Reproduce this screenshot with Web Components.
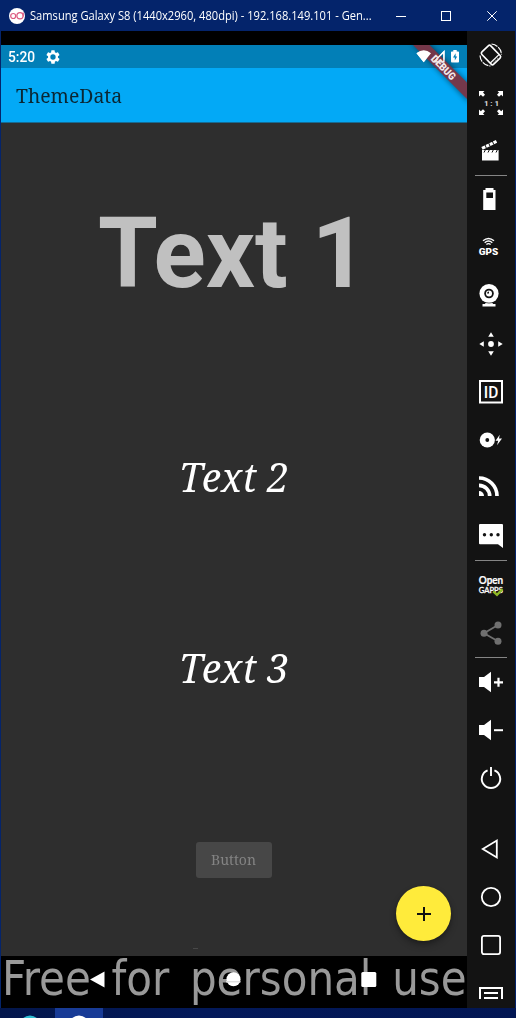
<!DOCTYPE html>
<html lang="en">
<head>
<meta charset="utf-8">
<title>Samsung Galaxy S8</title>
<style>
html,body{margin:0;width:516px;height:1018px;overflow:hidden;background:#04246b}
</style>
</head>
<body>
<emulator-window></emulator-window>
<script>
const define=(name,html,init)=>customElements.define(name,class extends HTMLElement{
  connectedCallback(){
    if(this.shadowRoot)return;
    this.attachShadow({mode:'open'}).innerHTML=typeof html==='function'?html(this):html;
    if(init)init(this);
  }
});

/* One line of text, stretched horizontally to the width given by "w". */
define('fit-text',`<style>:host{display:block;white-space:nowrap}span{display:inline-block;transform-origin:0 50%}</style><span><slot></slot></span>`,el=>{
  const s=el.shadowRoot.querySelector('span');
  const w=parseFloat(el.getAttribute('w'));
  el.style.width=w+'px';
  s.style.transform=`scaleX(${w/s.offsetWidth})`;
});

define('title-bar',`<style>
:host{display:flex;align-items:center;height:31px;background:#04246b;color:#fff;font:12px/18px "Open Sans","Noto Sans",sans-serif;box-sizing:border-box;padding-left:9px}
svg{display:block;flex:none}.logo{margin-right:5px}
.controls{margin-left:auto}
</style>
<svg class="logo" width="16" height="16" viewBox="0 0 16 16"><circle cx="8" cy="8" r="8" fill="#fff"/><g fill="none" stroke="#dc5a80" stroke-width="1.2"><circle cx="4.2" cy="8" r="2.5"/><circle cx="11" cy="7.8" r="3.1"/><path d="M14.2 4.5v4"/></g></svg>
<fit-text w="342">Samsung Galaxy S8 (1440x2960, 480dpi) - 192.168.149.101 - Gen...</fit-text>
<svg class="controls" width="136" height="30" viewBox="380 0 136 30" fill="none" stroke="#fff"><path d="M396 15.5h10"/><rect x="441.500" y="10.500" width="9" height="9"/><path d="M487.300 10.300l9.400 9.400M496.700 10.300l-9.400 9.400"/></svg>`);

define('status-bar',`<style>
:host{display:flex;align-items:center;height:23px;background:#027fb7;color:#fff;font:500 14px/23px Roboto,sans-serif;padding-left:7px}
svg{display:block;flex:none}fit-text{padding-top:1px}.gear{margin-left:9px}.right{margin-left:auto}
</style>
<fit-text w="27.500">5:20</fit-text>
<svg class="gear" width="16" height="16" viewBox="0 0 24 24" fill="#fff"><path d="M19.400 13c.04-.3.060-.65.060-1s-.02-.7-.07-1l2.100-1.650a.5.5 0 0 0 .12-.64l-2-3.460a.5.5 0 0 0-.6-.22l-2.500 1a7 7 0 0 0-1.700-.98l-.38-2.650A.5.5 0 0 0 14 2h-4a.5.5 0 0 0-.5.420l-.37 2.650a7 7 0 0 0-1.700.98l-2.500-1a.5.5 0 0 0-.6.220l-2 3.460a.5.5 0 0 0 .12.640L4.600 11a8 8 0 0 0 0 2l-2.150 1.650a.5.5 0 0 0-.12.640l2 3.460c.12.220.4.300.6.220l2.500-1c.52.400 1.080.730 1.700.98l.37 2.650c.04.240.25.420.5.420h4c.25 0 .46-.18.500-.42l.37-2.650a7 7 0 0 0 1.700-.98l2.500 1c.22.080.48 0 .6-.22l2-3.460a.5.5 0 0 0-.12-.64zM12 16a4 4 0 1 1 0-8 4 4 0 0 1 0 8z"/></svg>
<svg class="right" width="51" height="23" viewBox="416 45 51 23" fill="#fff"><path d="M416.500 53.200Q423.700 47.300 431 53.200L423.700 62.300z"/><path d="M443.900 51.800v10h-10z" fill="none" stroke="#fff" stroke-width="1.500"/><path d="M433 62.500l6-6v6z"/><path d="M453.300 51.500v-1.500h3.400v1.500h1.500q.8 0 .8.800v9.500q0 .8-.8.800h-6.400q-.8 0-.8-.8v-9.500q0-.8.8-.8z"/><path d="M455.600 53.300l-2.600 4.200h1.800v3l2.400-4.100h-1.600z" fill="#027fb7"/></svg>`);

define('app-bar',`<style>
:host{display:flex;align-items:center;box-sizing:border-box;height:55px;background:#03a9f6;color:#0b2733;font:19.500px/52px "Noto Serif","Droid Serif","DejaVu Serif Condensed","DejaVu Serif",serif;padding:2px 15px 0;border-bottom:1px solid #176b93}
</style><slot></slot>`);

define('debug-banner',`<style>:host{position:absolute;right:0;top:14px;width:66px;height:66px;overflow:hidden;z-index:3}svg{display:block}</style>
<svg width="66" height="66" viewBox="401 45 66 66"><defs><filter id="b" x="-30%" y="-30%" width="160%" height="160%"><feGaussianBlur stdDeviation="2.500"/></filter></defs>
<path d="M411 43L429 43L469 83V103z" fill="#000" opacity=".4" filter="url(#b)"/><path d="M411 43H427.500L469 84.500V101z" fill="#7b3546" opacity=".94"/>
<g fill="#fff"><path d="M416.500 53.200Q423.700 47.300 431 53.200L423.700 62.300z"/><path d="M443.900 51.800v10h-10z" fill="none" stroke="#fff" stroke-width="1.300"/></g>
<text transform="translate(443.500 67.500) rotate(45)" y="3.600" text-anchor="middle" textLength="30" lengthAdjust="spacingAndGlyphs" font-family="Roboto,sans-serif" font-weight="900" font-size="10.500" fill="#f3e9eb">DEBUG</text></svg>`);

define('raised-button',`<style>:host{display:flex;align-items:center;justify-content:center;width:75.500px;height:35.500px;border-radius:3px;background:#474747;color:#848484;font:13.500px/37px "Noto Serif","Droid Serif","DejaVu Serif Condensed","DejaVu Serif",serif}slot{display:block;padding:1px 1.500px 0 0}</style><slot></slot>`);

define('action-button',`<style>:host{position:absolute;left:395px;top:855px;width:55px;height:55px;border-radius:50%;background:#ffeb3b;box-shadow:0 4px 7px rgba(0,0,0,.3),0 1px 3px rgba(0,0,0,.15)}svg{display:block}</style>
<svg width="55" height="55" viewBox="0 0 55 55"><path d="M21 28h14M28 21v14" stroke="#111" stroke-width="2"/></svg>`);

define('nav-bar',`<style>
:host{display:block;position:relative;height:52px;background:#000}
.keys{display:block}
.mark{position:absolute;left:1px;top:-6px;color:#999;font:48px/56px "DejaVu Sans Condensed","DejaVu Sans",sans-serif;word-spacing:7.500px}
</style>
<div class="mark"><fit-text w="464.500">Free for personal use</fit-text></div>
<svg class="keys" style="position:relative" width="466" height="52" viewBox="1 956 466 52" fill="#fff"><path d="M90 979.500L104.500 971.500V987.500z"/><circle cx="233.500" cy="979.200" r="7"/><rect x="361.300" y="972" width="15" height="15" rx="1.500"/><path d="M226 981.700h14.500" stroke="#ddd" stroke-width="1.500"/></svg>`);

define('phone-screen',`<style>
:host{display:block;position:relative;width:466px;height:977px;margin-left:1px;background:#000;box-sizing:border-box;padding-top:14px;overflow:hidden}
main{display:flex;flex-direction:column;height:833px;background:#2e2e2e;color:#fff;overflow:hidden}
.t1{margin:73px 0 0 97px;font:700 98.500px/116px Roboto,sans-serif;color:#c0c0c0}
.t2{font:italic 40px/56px "Noto Serif","Droid Serif","Liberation Serif",serif;margin-left:177.500px}
.a{margin-top:137px}.b{margin-top:135px}
raised-button{margin:146px 0 0 195px}
.dash{width:5px;height:1px;background:#484848;margin:70px 0 0 192px}
</style>
<status-bar></status-bar>
<app-bar><fit-text w="106.500">ThemeData</fit-text></app-bar>
<main>
<fit-text class="t1" w="269">Text 1</fit-text>
<fit-text class="t2 a" w="109.500">Text 2</fit-text>
<fit-text class="t2 b" w="109.500">Text 3</fit-text>
<raised-button><fit-text w="44.500">Button</fit-text></raised-button>
<div class="dash"></div>
</main>
<nav-bar></nav-bar>
<action-button></action-button>
<debug-banner></debug-banner>`);

const corner='<path d="M0 0h5.500l-1.500 1.500 2 2.200-2 2-2.200-2L0 5.500z"/>';
const speaker='<path d="M0 7h5L12 1.800v20.400L5 17H0z"/>';
const icons={
rotate:'<g transform="rotate(46 12 12)" fill="none" stroke="#fff"><rect x="3.500" y="5.800" width="17" height="12.400" rx="1.800" stroke-width="1.600"/><path d="M17.300 6v12" stroke-width="1.300"/><path d="M18.900 9v1M18.900 11.500v1M18.900 14v1" stroke-width=".8"/></g><g fill="none" stroke="#fff" stroke-width="1.200"><path d="M12.500 1a11 11 0 0 1 10 10.500M1 12.500a11 11 0 0 0 10.500 10.500" stroke-dasharray="6.500 1"/></g>',
scale:corner+`<g transform="translate(24) scale(-1 1)">${corner}</g><g transform="translate(0 24) scale(1 -1)">${corner}</g><g transform="translate(24 24) scale(-1 -1)">${corner}</g><text x="5" y="15" font-family="Roboto,sans-serif" font-weight="700" font-size="8" textLength="15" fill="#ddd">1:1</text>`,
clap:'<path d="M3 11h16.600v10.500H3z"/><path d="M3 9.300L17.500 2.300" stroke="#fff" stroke-width="3"/><path d="M5.800 5.400l1.600 3.800M9.500 3.600l1.600 3.800M13.200 1.800l1.600 3.800M6.500 10.500L5 13.500M10.500 10.500L9 13.500M14.500 10.500L13 13.500M18.500 10.500L17 13.500" stroke="#131313" stroke-width="1"/>',
battery:'<path fill-rule="evenodd" d="M6.500 0h8v2h2v20H4.200V2h2.300zM7.300 4.600v5.500H14V4.600z"/>',
gps:'<g fill="none" stroke="#fff" stroke-width="1.400"><path d="M4 4.800Q9.500 0 15 4.800M5.700 6.800Q9.500 3.400 13.300 6.800M7.400 8.500Q9.500 6.800 11.600 8.500"/></g><text x="-.3" y="18.800" font-family="Roboto,sans-serif" font-weight="900" font-size="9.500" textLength="19.500" lengthAdjust="spacingAndGlyphs">GPS</text>',
cam:'<circle cx="10" cy="9.500" r="9.600"/><path d="M7 18h6l1 2h2.500v2.600h-13V20H6z"/><circle cx="10" cy="9.500" r="4.800" fill="#131313"/><circle cx="10" cy="9.500" r="3" fill="#fff"/><path d="M10 9.500V7.500a2 2 0 0 0-2 2z" fill="#131313"/><path d="M5 18.300q5 1.600 10 0" fill="none" stroke="#131313" stroke-width=".7"/>',
move:'<circle cx="12" cy="12" r="2.900"/><path d="M12 .3l2.800 4.500H9.200zM12 23.700l2.800-4.500H9.200zM.3 12l4.500-2.800v5.600zM23.700 12l-4.500-2.800v5.600z"/>',
id:'<rect x="1" y="1" width="22" height="21.500" fill="none" stroke="#fff" stroke-width="2"/><text x="12" y="17.800" text-anchor="middle" font-family="Roboto,sans-serif" font-weight="500" font-size="16.500" textLength="14.500" lengthAdjust="spacingAndGlyphs">ID</text>',
disc:'<circle cx="8.300" cy="12" r="7.600"/><circle cx="8.300" cy="12" r="1.900" fill="#131313"/><path d="M20.700 6.800l-4.200 6h2.700L18 17.300l5-6.800h-3z"/>',
rss:'<path d="M0 15a5 5 0 0 1 5 5H0z"/><path d="M0 9.300A10.700 10.700 0 0 1 10.700 20M0 2A18 18 0 0 1 18 20" fill="none" stroke="#fff" stroke-width="3.700"/>',
msg:'<path d="M1 0h22q1 0 1 1v23l-5-3.700H1q-1 0-1-1V1q0-1 1-1z"/><g fill="#131313"><circle cx="5.500" cy="10.700" r="1.700"/><circle cx="12.300" cy="10.700" r="1.700"/><circle cx="19" cy="10.700" r="1.700"/></g>',
gapps:'<text x="-.3" y="11" font-family="Lato,sans-serif" font-weight="700" stroke="#fff" stroke-width=".2" font-size="10.500" textLength="24.500" lengthAdjust="spacingAndGlyphs">Open</text><text x="-.2" y="19.500" font-family="Lato,sans-serif" font-weight="400" stroke="#fff" stroke-width=".35" font-size="8.300" textLength="24" lengthAdjust="spacingAndGlyphs">GAPPS</text><path d="M14.200 18.300l3.800 3.600 5.500-5.800" fill="none" stroke="#8fba25" stroke-width="2.300"/>',
share:'<g fill="#707070"><circle cx="19" cy="4" r="3.500"/><circle cx="5" cy="12.200" r="3.500"/><circle cx="19" cy="20.300" r="3.500"/></g><path d="M19 4L5 12.200l14 8.100" fill="none" stroke="#707070" stroke-width="1.800"/>',
volup:speaker+'<path d="M15 12.300h9M19.500 7.800v9" stroke="#fff" stroke-width="2.200"/>',
voldown:speaker+'<path d="M15 12.200h9" stroke="#fff" stroke-width="2"/>',
power:'<path d="M8.600 4.300a9.200 9.200 0 1 0 6.800 0M12 1v9" fill="none" stroke="#fff" stroke-width="1.900"/>',
back:'<path d="M3.800 12l14-8.400v16.800z" fill="none" stroke="#fff" stroke-width="1.800"/>',
home:'<circle cx="12" cy="12" r="9.200" fill="none" stroke="#fff" stroke-width="1.800"/>',
recent:'<rect x="2.900" y="2.900" width="18.200" height="18.200" rx="2" fill="none" stroke="#fff" stroke-width="1.800"/>',
menu:'<path d="M1 18V7h22v11M5 12h14M5 17h14" fill="none" stroke="#fff" stroke-width="2"/>'
};
define('tool-icon',el=>`<style>:host{display:flex;align-items:center;justify-content:center;height:48px;flex:none}svg{display:block;overflow:visible}</style><svg width="24" height="24" viewBox="0 0 24 24" fill="#fff">${icons[el.getAttribute('name')]}</svg>`);

const row=names=>names.split(' ').map(n=>`<tool-icon name="${n}"></tool-icon>`).join('');
define('tool-strip',`<style>:host{display:flex;flex-direction:column;width:48px;height:977px;background:#131313}hr{width:32px;height:1px;margin:0 auto;border:0;background:#858585;flex:none}.android{margin-top:23px;height:174px;overflow:hidden}</style>
${row('rotate scale clap')}<hr>${row('battery gps cam move id disc rss msg')}<hr>${row('gapps share')}<hr>${row('volup voldown power')}
<div class="android">${row('back home recent menu')}</div>`);

define('desktop-edge',`<style>:host{display:block;height:10px;background:linear-gradient(90deg,#03164b,#03195a 40%,#021653);overflow:hidden}svg{display:block}</style>
<svg width="516" height="10" viewBox="0 1008 516 10"><path d="M55 1008h48v10H55z" fill="#183b96"/><circle cx="30" cy="1026" r="10.500" fill="#30bfd3"/><circle cx="79" cy="1026" r="10.500" fill="#fff"/></svg>`);

define('emulator-window',`<style>:host{display:block;width:516px;height:1018px}.row{display:flex}</style>
<title-bar></title-bar><div class="row"><phone-screen></phone-screen><tool-strip></tool-strip></div><desktop-edge></desktop-edge>`);
</script>
</body>
</html>
